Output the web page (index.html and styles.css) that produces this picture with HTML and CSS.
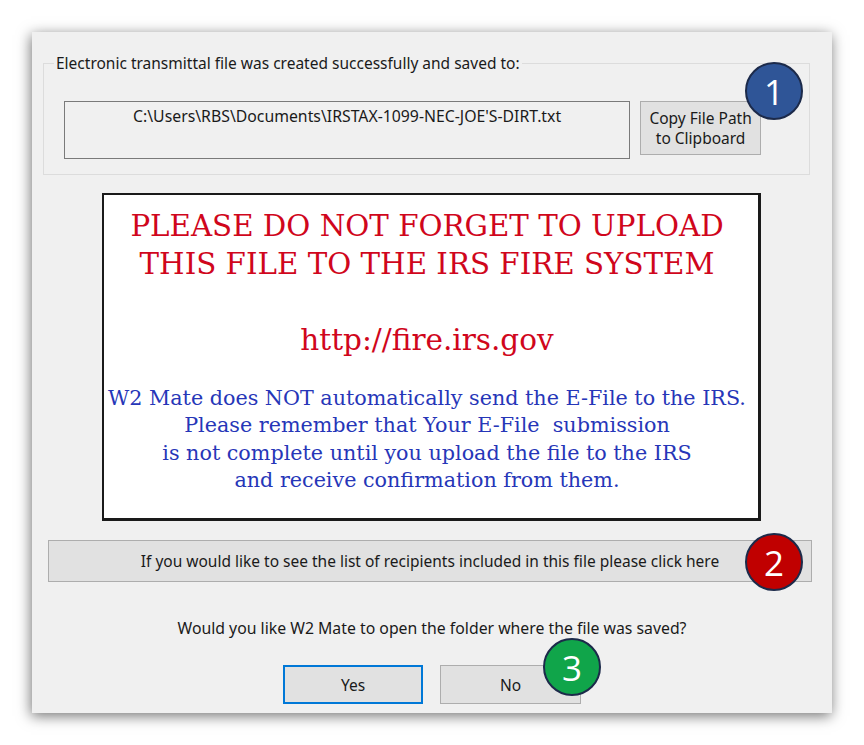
FILE: index.html
```html
<!DOCTYPE html>
<html lang="en">
<head>
<meta charset="utf-8">
<title>E-File created</title>
<link rel="stylesheet" href="styles.css">
</head>
<body>
<div class="dialog">
  <fieldset class="group">
    <legend>Electronic transmittal file was created successfully and saved to:</legend>
    <div class="path-row">
      <div class="path-box">C:\Users\RBS\Documents\IRSTAX-1099-NEC-JOE'S-DIRT.txt</div>
      <button class="btn copy-btn">Copy File Path<br>to Clipboard</button>
    </div>
  </fieldset>

  <div class="notice">
    <p class="warn">PLEASE DO NOT FORGET TO UPLOAD<br>THIS FILE TO THE IRS FIRE SYSTEM</p>
    <p class="url">http://fire.irs.gov</p>
    <p class="info">W2 Mate does NOT automatically send the E-File to the IRS.<br>Please remember that Your E-File&nbsp; submission<br>is not complete until you upload the file to the IRS<br>and receive confirmation from them.</p>
  </div>

  <button class="btn recipients">If you would like to see the list of recipients included in this file please click here</button>

  <p class="question">Would you like W2 Mate to open the folder where the file was saved?</p>

  <div class="actions">
    <button class="btn action yes">Yes</button>
    <button class="btn action">No</button>
  </div>

  <span class="badge badge-blue b1">1</span>
  <span class="badge badge-red b2">2</span>
  <span class="badge badge-green b3">3</span>
</div>
</body>
</html>
```

FILE: styles.css
```css
html, body {
  margin: 0;
  padding: 0;
  background: #ffffff;
}

body {
  width: 864px;
  height: 745px;
  overflow: hidden;
  font-family: "Noto Sans", "Open Sans", "DejaVu Sans", sans-serif;
  font-size: 15.5px;
  color: #1a1a1a;
}

.dialog {
  position: relative;
  margin: 32px 0 0 32px;
  width: 800px;
  height: 681px;
  background: #f0f0f0;
  box-shadow: -1px 3px 13px rgba(0, 0, 0, 0.55);
  display: flex;
  flex-direction: column;
  align-items: flex-start;
}

.group {
  box-sizing: border-box;
  width: 767px;
  margin: 22px 0 0 11px;
  padding: 0 48px 15px 10px;
  border: 1px solid #dcdcdc;
  min-inline-size: 0;
}

.group legend {
  padding: 0 2px;
  line-height: 19px;
  font-size: 15.5px;
}

.path-row {
  display: flex;
  align-items: flex-start;
  gap: 10px;
  margin: 28px 0 0 10px;
}

.path-box {
  box-sizing: border-box;
  width: 567px;
  height: 58px;
  border: 1px solid #7a7a7a;
  background: #f0f0f0;
  text-align: center;
  padding-top: 5px;
  line-height: 19px;
  font-size: 15.8px;
}

.btn {
  font-family: inherit;
  font-size: 15.5px;
  color: #1a1a1a;
  background: #e1e1e1;
  border: 1px solid #adadad;
  box-sizing: border-box;
  padding: 0;
  margin: 0;
  line-height: 20px;
}

.copy-btn {
  width: 121px;
  height: 54px;
}

.notice {
  box-sizing: border-box;
  width: 659px;
  height: 328px;
  margin: 18px 0 0 70px;
  padding-right: 8px;
  background: #ffffff;
  border: 2px solid #1a1a1a;
  border-right-width: 3px;
  border-bottom-width: 3px;
  text-align: center;
  font-family: "DejaVu Serif", "Liberation Serif", serif;
}

.notice p {
  margin: 0;
}

.warn {
  margin-top: 12px !important;
  color: #d0061c;
  font-size: 29.3px;
  line-height: 38px;
}

.url {
  margin-top: 38px !important;
  color: #d0061c;
  font-size: 29.5px;
  line-height: 38px;
}

.info {
  margin-top: 26px !important;
  color: #2636b8;
  font-size: 20.7px;
  line-height: 27.3px;
}

.recipients {
  width: 764px;
  height: 42px;
  margin: 19px 0 0 16px;
}

.question {
  align-self: stretch;
  margin: 37px 0 0 0;
  text-align: center;
  line-height: 19px;
  font-size: 15.8px;
}

.actions {
  align-self: stretch;
  display: flex;
  justify-content: center;
  gap: 17px;
  margin-top: 27px;
}

.action {
  width: 141px;
  height: 39px;
}

.action.yes {
  width: 140px;
  border: 2px solid #0078d7;
}

.badge {
  position: absolute;
  box-sizing: border-box;
  width: 58px;
  height: 58px;
  border-radius: 50%;
  border: 2px solid #1c2a4a;
  color: #ffffff;
  font-family: "Open Sans", "Noto Sans", sans-serif;
  font-size: 35px;
  display: flex;
  align-items: center;
  justify-content: center;
  line-height: 1;
}

.badge-blue { background: #2f5597; }
.badge-red { background: #c00000; }
.badge-green { background: #10a54a; }

.b1 { left: 713px; top: 30px; }
.b2 { left: 713px; top: 501px; }
.b3 { left: 511px; top: 606px; }
```
